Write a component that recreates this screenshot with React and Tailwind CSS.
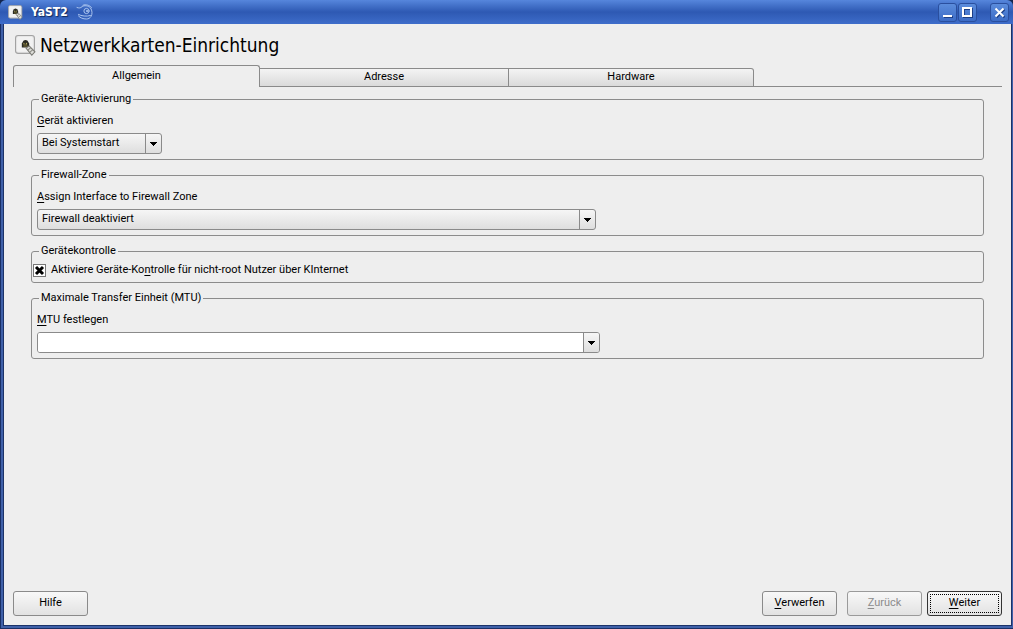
import { useState } from "react";

function Mnemonic({ children }) {
  return <span className="underline decoration-1 underline-offset-2">{children}</span>;
}

function ModuleIcon({ className }) {
  return (
    <svg viewBox="0 0 20 20" className={className} aria-hidden="true">
      <rect x="0.5" y="0.5" width="18" height="17" rx="2.5" fill="#e6e6e6" stroke="#a2a2a2" />
      <rect x="2" y="2" width="15" height="14" rx="1" fill="#f2f2f2" />
      <path d="M6.500 12V8L8 5.500q2-1.500 4 0L13.500 8V12z" fill="#2a2a22" />
      <path d="M8 11.500h4V9.500L10 8 8 9.500z" fill="#55502c" />
      <rect x="8" y="7.500" width="1" height="1.500" fill="#b3a95c" />
      <rect x="10.500" y="7.500" width="1" height="1.500" fill="#b3a95c" />
      <path d="M10.500 12.500l3-2 5.500 5.500-3 3.200z" fill="#dededa" stroke="#7c7c76" />
      <path d="M12 14.500l3-2.500M14 16.500l3-2.500" stroke="#8a8a82" />
    </svg>
  );
}

function Chameleon() {
  return (
    <svg viewBox="0 0 18 18" className="h-[18px] w-[18px]" fill="none" stroke="#a9c3ee" strokeLinecap="round" aria-hidden="true">
      <path d="M1 4.500c2 .8 3.500.6 5-.8C8 2 12.500 2.500 14.500 5c1.800 2.500 2 6 .5 8.500-1 1.500-2.500 2.500-4.500 2.500-3.500 0-6-1-8-3" />
      <path d="M2.500 11.500c3 1.500 8 2.300 12 1M7 2.200c3-1.200 6.500 0 8.500 2.300" />
      <circle cx="10.500" cy="8" r="2.600" />
      <circle cx="11" cy="8" r="0.600" fill="#d9e5fa" />
    </svg>
  );
}

function WindowButton({ label, children }) {
  return (
    <button
      type="button"
      aria-label={label}
      className="flex h-[19px] w-[19px] items-center justify-center rounded-[3px] border border-[#2a4f9e] bg-gradient-to-b from-[#5b8cdc] to-[#3c6cc6]"
    >
      <svg viewBox="0 0 17 17" className="h-[17px] w-[17px]" fill="none" aria-hidden="true">
        <g stroke="#1d3f86" strokeWidth="2" transform="translate(1 1)">
          {children}
        </g>
        <g stroke="#ffffff" strokeWidth="2">{children}</g>
      </svg>
    </button>
  );
}

function Arrow() {
  return (
    <svg viewBox="0 0 7 4" className="h-1 w-[7px]" aria-hidden="true">
      <path d="M0 0h7v1H6v1H5v1H4v1H3V3H2V2H1V1H0z" fill="#000000" />
    </svg>
  );
}

function Group({ title, children, tight }) {
  return (
    <fieldset
      className={`min-w-0 rounded-[3px] border border-[#8c8c8c] ${tight ? "px-px pt-[5px] pb-[5px]" : "px-[5px] pt-2 pb-[5px]"}`}
    >
      <legend className={`px-0.5 leading-[14px] ${tight ? "ml-[6px]" : "ml-0.5"}`}>{title}</legend>
      {children}
    </fieldset>
  );
}

function Dropdown({ id, options, width }) {
  return (
    <div className={`relative ${width}`}>
      <select
        id={id}
        className="block h-[21px] w-full appearance-none rounded-[3px] border border-[#8a8a8a] bg-gradient-to-b from-[#f6f6f6] to-[#dedede] pr-5 pb-0.5 pl-1 leading-4"
      >
        {options.map((o) => (
          <option key={o}>{o}</option>
        ))}
      </select>
      <span className="pointer-events-none absolute inset-y-px right-px flex w-4 items-center justify-center border-l border-[#8a8a8a]">
        <Arrow />
      </span>
    </div>
  );
}

const pushButton =
  "h-[25px] w-[75px] rounded-[3px] border bg-gradient-to-b from-[#f8f8f8] to-[#e2e2e2] pb-0.5 text-center";

const tabs = ["Allgemein", "Adresse", "Hardware"];

function Tabs() {
  const [active, setActive] = useState(0);
  return (
    <div role="tablist" className="flex h-[22px] items-end">
      {tabs.map((tab, i) => (
        <button
          key={tab}
          type="button"
          role="tab"
          aria-selected={active === i}
          onClick={() => setActive(i)}
          className={
            active === i
              ? "h-[22px] w-[247px] rounded-t-[3px] border border-b-0 border-[#8a8a8a] pb-0.5"
              : "h-[19px] w-[249px] border-y border-r border-[#8a8a8a] bg-gradient-to-b from-[#f4f4f4] to-[#dadada] pb-0.5 last-of-type:w-[245px] last-of-type:rounded-tr-[3px]"
          }
        >
          {tab}
        </button>
      ))}
      <div className="flex-1 border-b border-[#8a8a8a]" />
    </div>
  );
}

export default function App() {
  const [allowed, setAllowed] = useState(true);
  const [mtu, setMtu] = useState("");
  return (
    <div className="flex min-h-screen flex-col bg-[#12254f] font-[Roboto,'DejaVu_Sans_Condensed',sans-serif] text-[11px] leading-[14px] text-black">
      <header className="flex h-6 items-center rounded-t-md bg-gradient-to-b from-[#5686dc] via-[#2e59b3] to-[#3e6dca] pr-1 pl-2">
        <ModuleIcon className="h-[15px] w-[15px]" />
        <span className="ml-2 font-['DejaVu_Sans_Condensed','DejaVu_Sans',sans-serif] text-[12px] font-bold text-white [text-shadow:1px_1px_1px_#12295c]">
          YaST2
        </span>
        <span className="ml-2">
          <Chameleon />
        </span>
        <div className="ml-auto flex gap-px pt-px">
          <WindowButton label="Minimieren">
            <path d="M4 12h9" />
          </WindowButton>
          <WindowButton label="Maximieren">
            <rect x="4" y="4" width="8" height="8" />
          </WindowButton>
          <span className="w-[11px]" />
          <WindowButton label="Schließen">
            <path d="M4.500 4.500l8 8M12.500 4.500l-8 8" />
          </WindowButton>
        </div>
      </header>

      <div className="flex flex-1 flex-col border-b border-l border-[#1a2f66] bg-[#3f60a8] pr-px pb-0.5 pl-0.5">
        <div className="flex flex-1 flex-col border-r border-b border-l border-[#1c3268] bg-[#eeeeee] px-[9px] pt-[9px] pb-[9px]">
          <div className="flex h-6 items-center gap-1 pl-0.5">
            <ModuleIcon className="h-[21px] w-[21px]" />
            <h1 className="font-['DejaVu_Sans_Condensed','DejaVu_Sans',sans-serif] text-[19px] leading-6">
              Netzwerkkarten-Einrichtung
            </h1>
          </div>

          <main className="mt-2 flex-1">
            <Tabs />
            <div role="tabpanel" className="flex flex-col gap-2 px-[18px] pt-[5px]">
              <Group title="Geräte-Aktivierung">
                <label htmlFor="activate" className="mb-[5px] block">
                  <Mnemonic>G</Mnemonic>erät aktivieren
                </label>
                <Dropdown id="activate" width="w-[125px]" options={["Bei Systemstart"]} />
              </Group>

              <Group title="Firewall-Zone">
                <label htmlFor="zone" className="mb-[5px] block">
                  <Mnemonic>A</Mnemonic>ssign Interface to Firewall Zone
                </label>
                <Dropdown id="zone" width="w-full max-w-[559px]" options={["Firewall deaktiviert"]} />
              </Group>

              <Group title="Gerätekontrolle" tight>
                <label className="flex items-center gap-[5px]">
                  <span className="relative h-[13px] w-[13px]">
                    <input
                      type="checkbox"
                      checked={allowed}
                      onChange={(e) => setAllowed(e.target.checked)}
                      className="block h-[13px] w-[13px] appearance-none border border-[#777777] bg-white"
                    />
                    {allowed && (
                      <svg viewBox="0 0 13 13" className="pointer-events-none absolute inset-0" aria-hidden="true">
                        <path d="M3 3l7 7M10 3l-7 7" stroke="#000000" strokeWidth="3" />
                      </svg>
                    )}
                  </span>
                  <span>
                    Aktiviere Geräte-Ko<Mnemonic>n</Mnemonic>trolle für nicht-root Nutzer über KInternet
                  </span>
                </label>
              </Group>

              <Group title="Maximale Transfer Einheit (MTU)">
                <label htmlFor="mtu" className="mb-[5px] block">
                  <Mnemonic>M</Mnemonic>TU festlegen
                </label>
                <div className="flex h-[21px] w-full max-w-[563px] overflow-hidden rounded-[3px] border border-[#8a8a8a]">
                  <input
                    id="mtu"
                    value={mtu}
                    onChange={(e) => setMtu(e.target.value)}
                    className="min-w-0 flex-1 bg-white px-1 outline-none"
                  />
                  <button
                    type="button"
                    aria-label="MTU-Werte anzeigen"
                    className="flex w-4 items-center justify-center border-l border-[#8a8a8a] bg-gradient-to-b from-[#f6f6f6] to-[#dedede]"
                  >
                    <Arrow />
                  </button>
                </div>
              </Group>
            </div>
          </main>

          <footer className="flex items-center">
            <button type="button" className={`${pushButton} border-[#8a8a8a]`}>
              Hilfe
            </button>
            <button type="button" className={`${pushButton} ml-auto border-[#8a8a8a]`}>
              <Mnemonic>V</Mnemonic>erwerfen
            </button>
            <button type="button" disabled className={`${pushButton} ml-2.5 border-[#9a9a9a] text-[#8c8c8c]`}>
              <Mnemonic>Z</Mnemonic>urück
            </button>
            <button
              type="button"
              className={`${pushButton} ml-[5px] border-[#333333] outline-1 -outline-offset-4 outline-dotted outline-black`}
            >
              <Mnemonic>W</Mnemonic>eiter
            </button>
          </footer>
        </div>
      </div>
    </div>
  );
}
